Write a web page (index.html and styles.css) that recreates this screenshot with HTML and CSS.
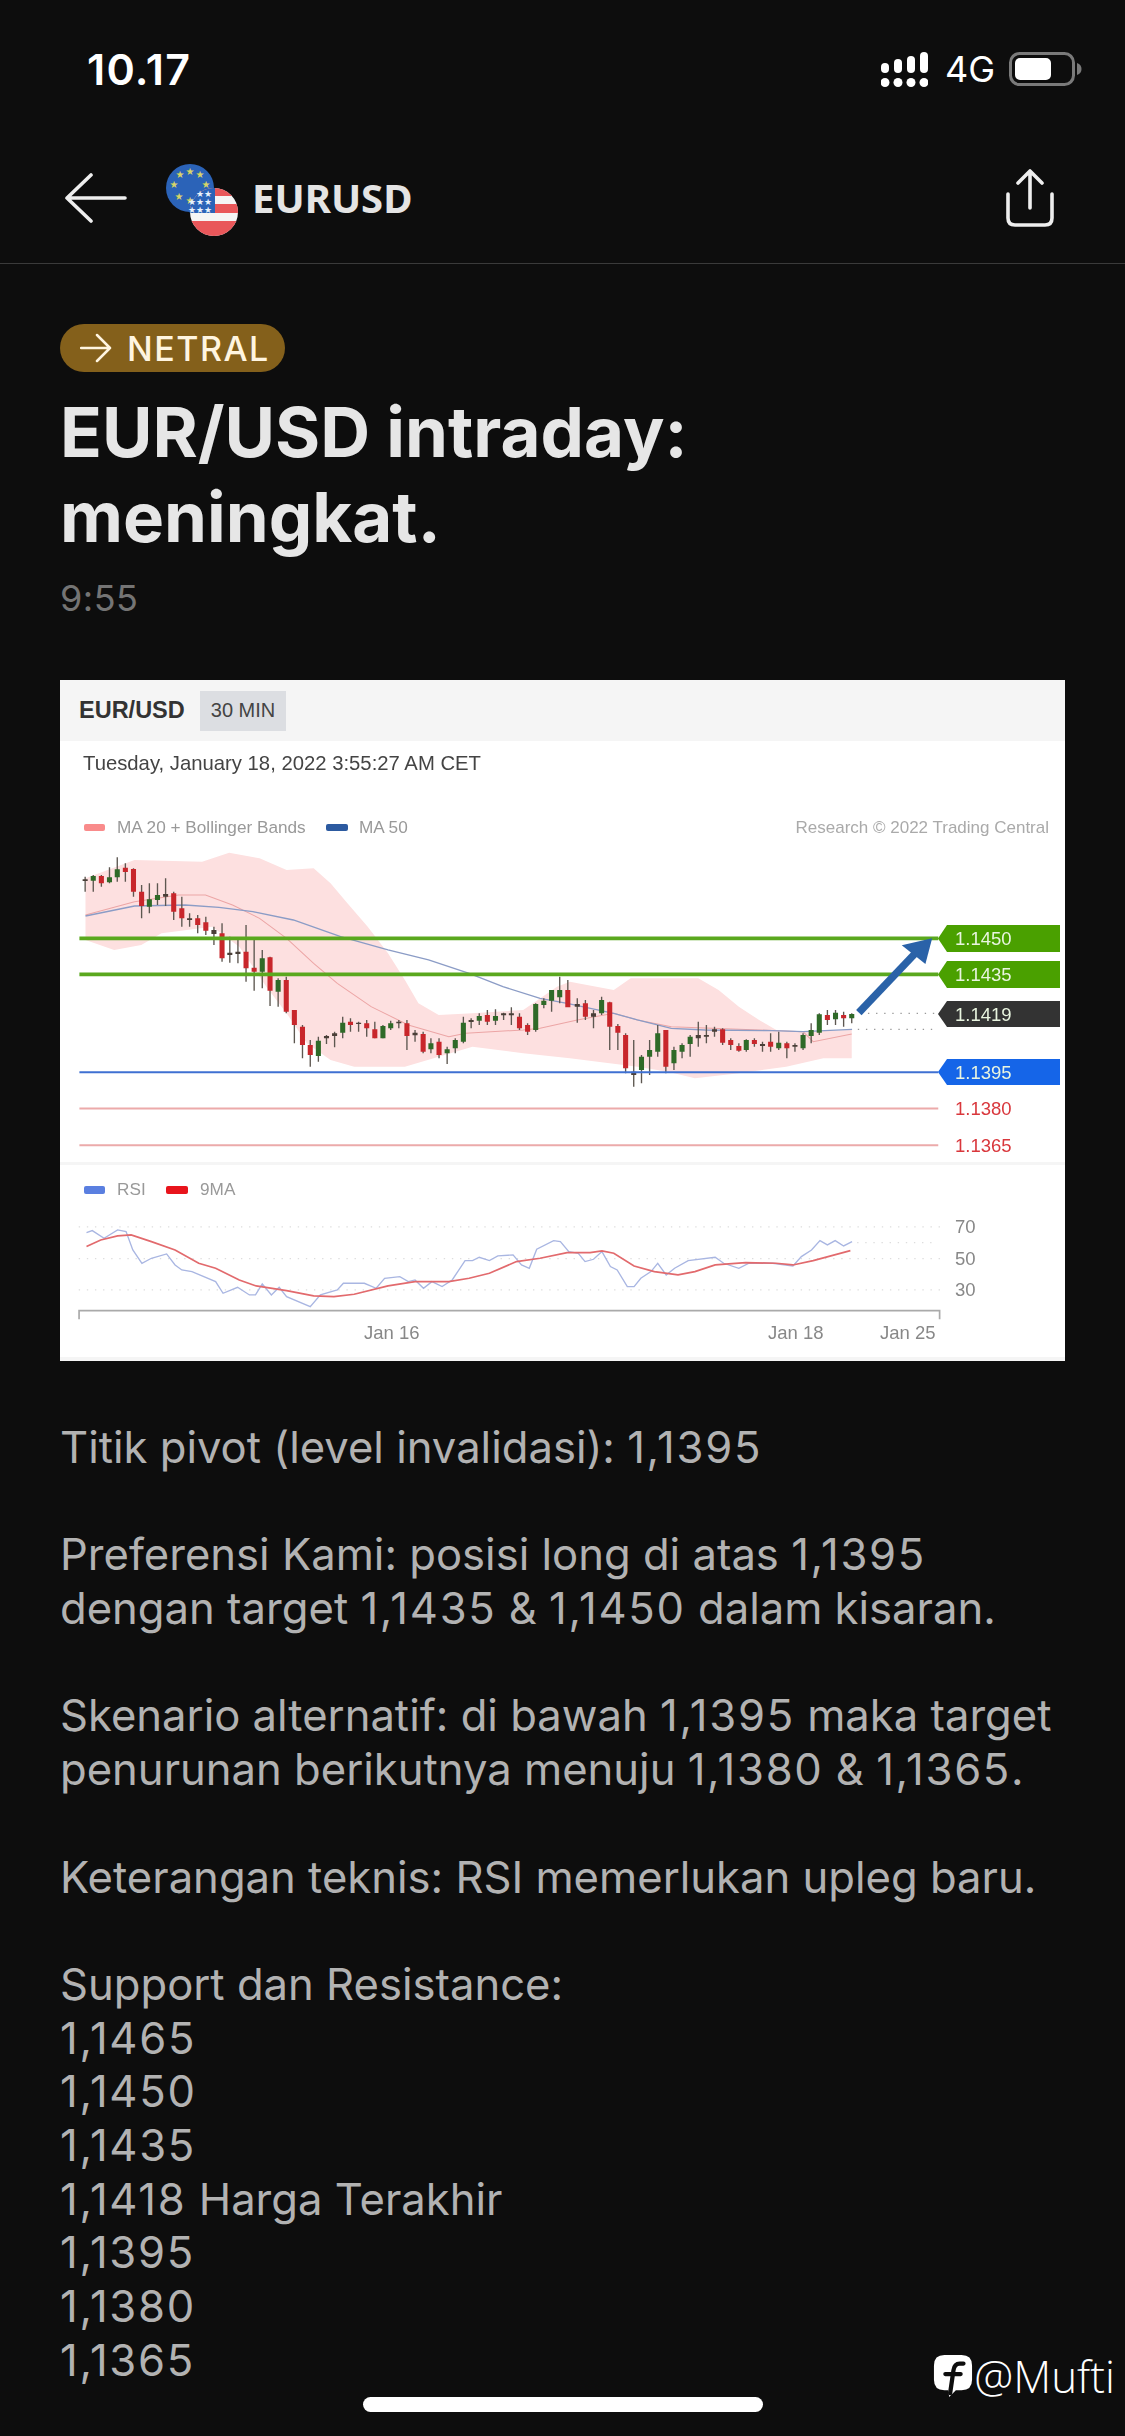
FILE: index.html
```html
<!DOCTYPE html>
<html lang="id">
<head>
  <meta charset="UTF-8">
  <meta name="viewport" content="width=device-width, initial-scale=1.0">
  <title>EURUSD</title>
  <link rel="stylesheet" href="styles.css">
</head>
<body>
  <div class="status-bar">
    <span class="clock">10.17</span>
    <div class="status-icons">
      <svg class="signal" width="47" height="35" viewBox="0 0 47 35" fill="#fff">
        <rect x="0" y="11" width="8" height="10" rx="4"/>
        <rect x="13" y="7" width="8" height="14" rx="4"/>
        <rect x="26" y="4" width="8" height="17" rx="4"/>
        <rect x="39" y="0" width="8" height="21" rx="4"/>
        <circle cx="4" cy="30.500" r="4.500"/>
        <circle cx="17" cy="30.500" r="4.500"/>
        <circle cx="30" cy="30.500" r="4.500"/>
        <circle cx="43" cy="30.500" r="4.500"/>
      </svg>
      <span class="network">4G</span>
      <svg class="battery" width="73" height="34" viewBox="0 0 73 34">
        <rect x="1.500" y="1.500" width="63" height="31" rx="9" fill="none" stroke="#7a7a7a" stroke-width="3"/>
        <rect x="6" y="6" width="36" height="22" rx="5" fill="#fff"/>
        <path d="M68 11c3 1 4.500 3 4.500 6s-1.500 5-4.500 6z" fill="#7a7a7a"/>
      </svg>
    </div>
  </div>

  <header class="top-bar">
    <svg class="back" width="62" height="50" viewBox="0 0 62 50" fill="none" stroke="#eee" stroke-width="3.600" stroke-linecap="round" stroke-linejoin="round">
      <path d="M2 25H60M26 2L2 25L26 48"/>
    </svg>
    <svg class="flags" width="74" height="74" viewBox="0 0 74 74">
      <defs>
        <clipPath id="usClip"><circle cx="49" cy="49" r="24"/></clipPath>
      </defs>
      <circle cx="25" cy="25" r="24" fill="#2b63b8"/>
      <g fill="#d6d468" font-size="10" font-family="'DejaVu Sans', sans-serif" text-anchor="middle">
        <text x="25" y="12">★</text>
        <text x="15" y="15">★</text>
        <text x="35" y="15">★</text>
        <text x="9" y="25">★</text>
        <text x="41" y="25">★</text>
        <text x="14" y="37">★</text>
        <text x="25" y="41">★</text>
      </g>
      <g clip-path="url(#usClip)">
        <rect x="25" y="25" width="48" height="48" fill="#f5f5f5"/>
        <rect x="25" y="25" width="48" height="8" fill="#e9575a"/>
        <rect x="25" y="41" width="48" height="9" fill="#e9575a"/>
        <rect x="25" y="58" width="48" height="15" fill="#e9575a"/>
        <rect x="25" y="25" width="25" height="25" fill="#2b63b8"/>
      </g>
      <g fill="#e8f2fb" font-size="9" font-family="'DejaVu Sans', sans-serif" text-anchor="middle">
        <text x="35" y="34">★</text>
        <text x="43" y="34">★</text>
        <text x="27" y="42">★</text>
        <text x="35" y="42">★</text>
        <text x="43" y="42">★</text>
        <text x="27" y="50">★</text>
        <text x="35" y="50">★</text>
        <text x="43" y="50">★</text>
      </g>
    </svg>
    <span class="symbol">EURUSD</span>
    <svg class="share" width="50" height="60" viewBox="0 0 50 60" fill="none" stroke="#eee" stroke-width="3.600" stroke-linecap="round" stroke-linejoin="round">
      <path d="M25 3V40M13 15L25 3L37 15M3 26V50Q3 57 10 57H40Q47 57 47 50V26"/>
    </svg>
  </header>

  <main class="article">
    <span class="badge">
      <svg width="32" height="30" viewBox="0 0 32 30" fill="none" stroke="#fff5e0" stroke-width="2.500" stroke-linecap="round" stroke-linejoin="round">
        <path d="M1 15H30M17 2L30 15L17 28"/>
      </svg>
      NETRAL
    </span>
    <h1 class="title">EUR/USD intraday:<br>meningkat.</h1>
    <div class="time">9:55</div>

    <figure class="chart">
      <div class="chart-head">
        <strong>EUR/USD</strong>
        <span class="interval">30 MIN</span>
      </div>
      <svg class="chart-plot" width="1005" height="620" viewBox="0 61 1005 620">
        <rect x="0" y="61" width="1005" height="620" fill="#fff"/>
        <text class="date" x="23" y="90">Tuesday, January 18, 2022 3:55:27 AM CET</text>

        <rect x="24" y="144" width="21" height="7" rx="2" fill="#f98b8b"/>
        <text class="legend" x="57" y="153">MA 20 + Bollinger Bands</text>
        <rect x="266" y="144" width="22" height="7" rx="2" fill="#2c5aa0"/>
        <text class="legend" x="299" y="153">MA 50</text>
        <text class="credit" x="989" y="153" text-anchor="end">Research © 2022 Trading Central</text>

        <!-- coordinates in this group are at 3x so they read like the zoomed chart -->
        <g transform="translate(-10 -10) scale(.338 .3333)" fill="none">
          <path fill="#fde0e0" stroke="none" d="M105 625L250 570L450 575L530 548L620 565L700 600L780 595L830 640L880 700L940 770L1000 850L1050 930L1090 1000L1150 1035L1250 1030L1400 1020L1500 950L1538 935L1668 960L1718 925L1918 925L1978 960L2038 1010L2098 1050L2158 1085L2238 1085L2372 1080V1165L2288 1165L2178 1190L2038 1210L1908 1225L1828 1205L1738 1190L1538 1165L1400 1150L1250 1130L1150 1160L1050 1190L900 1190L830 1170L760 1120L700 1030L640 950L560 830L480 770L330 790L270 825L190 840L105 810Z"/>
          <path stroke="#eca5a5" stroke-width="3" d="M105 735L250 695L380 675L460 675L540 705L620 745L700 805L780 880L850 940L950 1010L1060 1065L1180 1100L1230 1090L1400 1080L1450 1075L1560 1050L1668 1030L1738 1050L1838 1070L2228 1085L2258 1115L2372 1092"/>
          <path stroke="#8b9cc6" stroke-width="4" d="M105 738L250 708L400 705L500 712L600 725L720 750L860 800L1000 840L1120 870L1240 910L1340 950L1450 985L1530 1000L1668 1030L1738 1050L1838 1075L1938 1080L2138 1082L2228 1085L2373 1078"/>

          <path stroke="#5d5750" stroke-width="4" d="M104 620V665M128 615V665M152 615V650M176 592V640M199 562V635M223 580V635M247 595V680M271 645V745M294 640V730M318 640V705M342 625V708M366 665V750M390 680V770M413 730V770M437 735V790M461 740V795M485 770V825M509 760V875M532 800V878M556 810V880M580 765V935M604 810V962M628 840V955M651 860V1008M675 925V1010M699 920V1030M723 1020V1120M747 1065V1165M770 1110V1190M794 1100V1175M818 1095V1122M842 1085V1132M866 1040V1105M889 1045V1085M913 1055V1085M937 1050V1100M961 1055V1105M985 1065V1105M1008 1052V1080M1032 1050V1075M1056 1050V1140M1080 1080V1115M1104 1085V1150M1127 1105V1150M1151 1105V1165M1175 1130V1182M1199 1105V1150M1223 1040V1120M1246 1045V1075M1270 1030V1065M1294 1020V1065M1318 1018V1065M1342 1028V1050M1365 1012V1065M1389 1030V1080M1413 1060V1095M1437 1000V1085M1461 985V1015M1484 960V1025M1508 920V1000M1532 930V1010M1560 985V1058M1584 990V1050M1608 1020V1075M1632 980V1035M1656 995V1140M1680 1062V1140M1703 1090V1210M1727 1110V1250M1750 1155V1240M1774 1110V1215M1798 1065V1160M1822 1080V1210M1846 1130V1200M1870 1120V1165M1894 1095V1160M1918 1055V1130M1942 1065V1120M1966 1070V1100M1990 1075V1125M2014 1105V1140M2038 1120V1145M2060 1108V1145M2084 1105V1130M2108 1115V1145M2132 1090V1145M2156 1085V1140M2180 1115V1165M2204 1120V1145M2228 1090V1140M2252 1060V1120M2276 1030V1095M2300 1020V1065M2324 1020V1065M2348 1025V1070M2372 1030V1060"/>
          <path stroke="#c8262b" stroke-width="15" d="M152 618V640M223 593V606M247 597V665M271 665V708M366 670V725M390 715V745M437 745V765M461 757V782M509 790V865M580 845V895M604 893V905M651 862V962M699 930V1025M723 1020V1065M747 1070V1125M770 1125V1155M889 1055V1065M937 1060V1075M961 1078V1105M1056 1060V1098M1104 1092V1145M1151 1115V1155M1294 1035V1055M1389 1040V1075M1413 1065V1085M1532 960V1012M1584 1000V1040M1656 997V1070M1680 1068V1088M1703 1095V1195M1822 1080V1190M1990 1078V1118M2014 1110V1125M2038 1128V1142M2084 1110V1122M2132 1115V1130M2180 1120V1135M2300 1035V1050M2348 1035V1045"/>
          <path stroke="#2f6a28" stroke-width="15" d="M128 618V632M176 622V637M199 598V622M294 688V710M318 675V690M628 865V905M675 930V965M794 1112V1158M866 1058V1088M985 1068V1105M1008 1060V1075M1127 1120V1138M1175 1138V1150M1199 1110V1135M1223 1058V1115M1270 1038V1052M1318 1038V1052M1437 1002V1080M1461 992V1005M1484 960V992M1508 960V982M1632 990V1030M1750 1160V1200M1774 1140V1160M1798 1090V1145M1846 1140V1180M1870 1125V1145M1894 1100V1122M2060 1110V1140M2156 1118V1135M2228 1095V1135M2252 1080V1098M2276 1033V1088M2324 1028V1048M2372 1032V1045"/>
          <path stroke="#4a3f38" stroke-width="15" d="M104 628V633M342 672V680M413 745V750M485 780V792M532 848V855M556 845V852M818 1098V1105M842 1090V1098M913 1058V1062M1032 1055V1060M1080 1088V1096M1246 1050V1056M1342 1030V1036M1365 1030V1036M1560 1002V1010M1608 1030V1040M1727 1205V1215M1918 1095V1105M1942 1095V1100M1966 1078V1085M2108 1122V1128M2204 1125V1130"/>

          <g stroke="#5aa81e" stroke-width="11">
            <path d="M87 805H2628"/>
            <path d="M87 913H2628"/>
          </g>
          <path stroke="#3f70d2" stroke-width="6" d="M87 1207H2628"/>
          <path stroke="#ecaaaa" stroke-width="6" d="M87 1316H2628M87 1426H2628"/>
          <path stroke="#999" stroke-width="4" stroke-dasharray="4 20" d="M2420 1030H2628M2390 1078H2628"/>

          <path stroke="#2a62a8" stroke-width="22" d="M2393 1028L2560 850"/>
          <path fill="#2a62a8" d="M2610 805L2520 826L2590 882Z"/>

          <path stroke="#ddd" stroke-width="4" stroke-dasharray="4 20" d="M85 1671H2633M85 1766H2633M85 1860H2633M2388 1718H2623"/>
          <path stroke="#a9b6e2" stroke-width="4" d="M108 1688L125 1682L160 1705L200 1680L225 1685L245 1740L272 1780L300 1765L345 1752L370 1785L390 1800L420 1805L490 1835L512 1870L555 1852L590 1875L608 1875L628 1842L655 1875L678 1852L700 1880L770 1910L800 1875L850 1860L868 1840L930 1840L965 1855L990 1825L1035 1820L1060 1835L1080 1830L1105 1855L1130 1835L1160 1850L1190 1830L1228 1772L1250 1772L1270 1762L1300 1772L1325 1758L1370 1755L1395 1785L1418 1795L1440 1738L1490 1712L1510 1715L1535 1745L1563 1750L1583 1775L1608 1768L1633 1745L1658 1790L1678 1800L1708 1850L1728 1850L1748 1825L1778 1805L1798 1780L1823 1815L1848 1795L1888 1772L1968 1762L1993 1780L2038 1795L2068 1780L2138 1780L2198 1788L2223 1760L2253 1740L2278 1712L2300 1725L2323 1712L2348 1728L2373 1715"/>
          <path stroke="#e26a6d" stroke-width="5" d="M108 1730L150 1710L200 1698L240 1695L300 1715L370 1740L440 1780L490 1795L560 1830L610 1848L700 1862L780 1878L840 1880L900 1873L1000 1848L1080 1835L1180 1835L1240 1825L1300 1810L1380 1775L1450 1765L1530 1748L1598 1748L1633 1743L1668 1750L1728 1788L1788 1805L1858 1815L1908 1805L1968 1785L2058 1778L2148 1780L2198 1785L2258 1772L2368 1742"/>
          <path stroke="#aaa" stroke-width="5" d="M86 1948V1922H2632V1948"/>
        </g>

        <rect x="0" y="482" width="1005" height="3" fill="#f5f5f5"/>
        <rect x="0" y="677" width="1005" height="4" fill="#f5f5f5"/>

        <path d="M887 245H1000V272H887L878 258.500Z" fill="#4aa000"/>
        <path d="M887 281H1000V308H887L878 294.500Z" fill="#4aa000"/>
        <path d="M887 321H1000V347H887L878 334Z" fill="#333"/>
        <path d="M887 379H1000V405H887L878 392Z" fill="#1565e8"/>
        <text class="level light" x="895" y="265">1.1450</text>
        <text class="level light" x="895" y="301">1.1435</text>
        <text class="level light" x="895" y="341">1.1419</text>
        <text class="level light" x="895" y="399">1.1395</text>
        <text class="level red" x="895" y="435">1.1380</text>
        <text class="level red" x="895" y="472">1.1365</text>

        <rect x="24" y="506" width="21" height="8" rx="2" fill="#5a7fe0"/>
        <text class="legend" x="57" y="515">RSI</text>
        <rect x="106" y="506" width="22" height="8" rx="2" fill="#e8141c"/>
        <text class="legend" x="140" y="515">9MA</text>

        <text class="axis" x="895" y="553">70</text>
        <text class="axis" x="895" y="585">50</text>
        <text class="axis" x="895" y="616">30</text>
        <text class="axis" x="304" y="659">Jan 16</text>
        <text class="axis" x="708" y="659">Jan 18</text>
        <text class="axis" x="820" y="659">Jan 25</text>
      </svg>
    </figure>

    <div class="body-text">
      <p>Titik pivot (level invalidasi): <span class="num">1,1395</span></p>
      <p>Preferensi Kami: posisi long di atas <span class="num">1,1395</span><br>dengan target <span class="num">1,1435</span> &amp; <span class="num">1,1450</span> dalam kisaran.</p>
      <p>Skenario alternatif: di bawah <span class="num">1,1395</span> maka target<br>penurunan berikutnya menuju <span class="num">1,1380</span> &amp; <span class="num">1,1365</span>.</p>
      <p>Keterangan teknis: RSI memerlukan upleg baru.</p>
      <p>Support dan Resistance:<br><span class="num">1,1465</span><br><span class="num">1,1450</span><br><span class="num">1,1435</span><br><span class="num">1,1418</span> Harga Terakhir<br><span class="num">1,1395</span><br><span class="num">1,1380</span><br><span class="num">1,1365</span></p>
    </div>
  </main>

  <div class="watermark">
    <svg width="40" height="44" viewBox="0 0 42 44">
      <path d="M12 0H30Q41 0 41 11V26Q41 37 30 37H24L17 44L16 37H12Q1 37 1 26V11Q1 0 12 0Z" fill="#fff"/>
      <path d="M18 40L21.500 16Q22.500 9 28 9H32M13 20H29" fill="none" stroke="#0d0d0d" stroke-width="4.500" stroke-linecap="round"/>
    </svg>
    <span>@Mufti</span>
  </div>
  <div class="home-bar"></div>
</body>
</html>
```

FILE: styles.css
```css
* {
  box-sizing: border-box;
}
body {
  position: relative;
  margin: 0;
  width: 1125px;
  height: 2436px;
  overflow: hidden;
  background: #0d0d0d;
  color: #b2b2b2;
  font-family: Inter, "Liberation Sans", sans-serif;
}

/* Status bar */
.status-bar {
  display: flex;
  justify-content: space-between;
  align-items: center;
  height: 138px;
  padding: 0 43px 0 87px;
  color: #fff;
}
.clock {
  font-size: 43px;
  font-weight: 600;
  letter-spacing: 1.200px;
}
.status-icons {
  display: flex;
  align-items: center;
}
.signal {
  margin-right: 17px;
}
.network {
  font-size: 36px;
  margin-right: 14px;
}

/* Top bar */
.top-bar {
  display: flex;
  align-items: center;
  height: 126px;
  padding: 0 70px 6px 65px;
  border-bottom: 1px solid #3a3a3a;
}
.back {
  margin-right: 38px;
}
.flags {
  margin-right: 13px;
  margin-top: 4px;
}
.symbol {
  flex: 1;
  font-family: "Noto Sans", sans-serif;
  font-size: 40px;
  font-weight: 700;
  color: #e4e4e4;
}

/* Article */
.article {
  padding: 60px 60px 0;
}
.badge {
  display: inline-flex;
  align-items: center;
  gap: 15px;
  height: 48px;
  padding: 0 15px 0 20px;
  border-radius: 24px;
  background: #84601b;
  color: #fff5e0;
  font-size: 34px;
  font-weight: 500;
  letter-spacing: 1.500px;
  vertical-align: top;
}
.title {
  margin: 18px 0 0;
  font-size: 69px;
  font-weight: 700;
  line-height: 85px;
  color: #e6e6e6;
}
.time {
  margin-top: 16px;
  font-size: 36px;
  line-height: 44px;
  letter-spacing: .500px;
  color: #747474;
}

/* Chart picture */
.chart {
  margin: 60px 0 0;
  width: 1005px;
  height: 681px;
  background: #fff;
  font-family: "Liberation Sans", Arial, sans-serif;
}
.chart-head {
  display: flex;
  align-items: center;
  gap: 15px;
  height: 61px;
  padding: 0 0 0 19px;
  background: #f5f5f5;
  color: #333;
  font-size: 23.500px;
}
.interval {
  display: flex;
  align-items: center;
  height: 40px;
  padding: 0 11px;
  background: #dcdee2;
  color: #444;
  font-size: 20px;
}
.chart-plot {
  display: block;
  filter: blur(.4px);
}
.date {
  font-size: 20.300px;
  fill: #444;
}
.legend {
  font-size: 17.200px;
  fill: #999;
}
.credit {
  font-size: 17px;
  fill: #aaa;
}
.level {
  font-size: 18.500px;
}
.light {
  fill: #e9f5e0;
}
.red {
  fill: #d9373c;
}
.axis {
  font-size: 18.500px;
  fill: #888;
}

/* Body text */
.body-text {
  margin-top: 60px;
  font-size: 43.600px;
  line-height: 53.700px;
}
.body-text p {
  margin: 0 0 53.700px;
}
.num {
  letter-spacing: 1.700px;
}

/* Overlays */
.watermark {
  position: absolute;
  right: 10px;
  bottom: 38px;
  display: flex;
  align-items: center;
  gap: 1px;
  color: #fff;
  font-family: "Open Sans", sans-serif;
  font-size: 44px;
  font-weight: 300;
  line-height: 44px;
}
.home-bar {
  position: absolute;
  left: 363px;
  bottom: 24px;
  width: 400px;
  height: 15px;
  border-radius: 8px;
  background: #fff;
}
```
